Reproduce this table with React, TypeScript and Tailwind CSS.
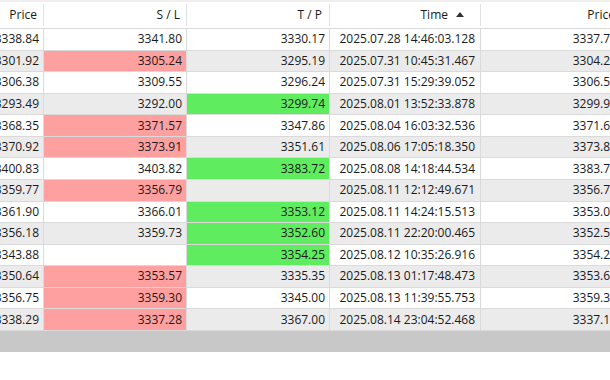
import React, { FC } from "react";

type Row = {
	price: string;
	sl: string;
	tp: string;
	time: string;
	price2: string;
	slHit?: boolean;
	tpHit?: boolean;
};

const rows: Row[] = [
	{ price: "3338.84", sl: "3341.80", tp: "3330.17", time: "2025.07.28 14:46:03.128", price2: "3337.77" },
	{ price: "3301.92", sl: "3305.24", tp: "3295.19", time: "2025.07.31 10:45:31.467", price2: "3304.29", slHit: true },
	{ price: "3306.38", sl: "3309.55", tp: "3296.24", time: "2025.07.31 15:29:39.052", price2: "3306.59" },
	{ price: "3293.49", sl: "3292.00", tp: "3299.74", time: "2025.08.01 13:52:33.878", price2: "3299.91", tpHit: true },
	{ price: "3368.35", sl: "3371.57", tp: "3347.86", time: "2025.08.04 16:03:32.536", price2: "3371.62", slHit: true },
	{ price: "3370.92", sl: "3373.91", tp: "3351.61", time: "2025.08.06 17:05:18.350", price2: "3373.85", slHit: true },
	{ price: "3400.83", sl: "3403.82", tp: "3383.72", time: "2025.08.08 14:18:44.534", price2: "3383.71", tpHit: true },
	{ price: "3359.77", sl: "3356.79", tp: "", time: "2025.08.11 12:12:49.671", price2: "3356.74", slHit: true },
	{ price: "3361.90", sl: "3366.01", tp: "3353.12", time: "2025.08.11 14:24:15.513", price2: "3353.02", tpHit: true },
	{ price: "3356.18", sl: "3359.73", tp: "3352.60", time: "2025.08.11 22:20:00.465", price2: "3352.54", tpHit: true },
	{ price: "3343.88", sl: "", tp: "3354.25", time: "2025.08.12 10:35:26.916", price2: "3354.26", tpHit: true },
	{ price: "3350.64", sl: "3353.57", tp: "3335.35", time: "2025.08.13 01:17:48.473", price2: "3353.64", slHit: true },
	{ price: "3356.75", sl: "3359.30", tp: "3345.00", time: "2025.08.13 11:39:55.753", price2: "3359.32", slHit: true },
	{ price: "3338.29", sl: "3337.28", tp: "3367.00", time: "2025.08.14 23:04:52.468", price2: "3337.15", slHit: true },
];

const cols = "grid grid-cols-[143px_143px_143px_151px_140px]";

const App: FC = () => {
	return (
		<div
			className="w-[610px] h-[380px] overflow-hidden bg-white text-[12px] text-[#1a1a1a]"
			style={{ fontFamily: '"Open Sans", "Noto Sans", sans-serif' }}
		>
			<div className="ml-[-99px] w-[720px]">
				{/* header */}
				<div className="h-[2px] bg-[#f0f0f0]" />
				<div className={`${cols} h-[26px] bg-white`}>
					<div className="flex items-center justify-end pr-[6px] border-r border-[#e3e3e3] my-[2px]">Price</div>
					<div className="flex items-center justify-end pr-[6px] border-r border-[#e3e3e3] my-[2px]">S / L</div>
					<div className="flex items-center justify-end pr-[7px] border-r border-[#e3e3e3] my-[2px]">T / P</div>
					<div className="flex items-center justify-end pr-[16px] border-r border-[#e3e3e3] my-[2px]">
						<span>Time</span>
						<svg width="8" height="5" viewBox="0 0 8 5" className="ml-[8px] mb-[2px]">
							<polygon points="4,0 8,5 0,5" fill="#333" />
						</svg>
					</div>
					<div className="flex items-center justify-end pr-[6px] my-[2px]">Price</div>
				</div>

				{/* rows */}
				{rows.map((r, i) => {
					const base = i % 2 === 0 ? "bg-white" : "bg-[#ebebeb]";
					return (
						<div key={i} className={`${cols} h-[21.57px] border-t border-[#dadada]`}>
							<div className={`${base} flex items-center justify-end pr-[4px] border-r border-[#dadada]`}>{r.price}</div>
							<div className={`${r.slHit ? "bg-[#ffa0a0]" : base} flex items-center justify-end pr-[4px] border-r border-[#dadada]`}>{r.sl}</div>
							<div className={`${r.tpHit ? "bg-[#5fed5f]" : base} flex items-center justify-end pr-[4px] border-r border-[#dadada]`}>{r.tp}</div>
							<div className={`${base} flex items-center justify-end pr-[5px] border-r border-[#dadada]`}>{r.time}</div>
							<div className={`${base} flex items-center justify-end pr-[4px]`}>{r.price2}</div>
						</div>
					);
				})}

				{/* horizontal scrollbar */}
				<div className="h-[22px] bg-[#c8c8c8] border-t border-[#dadada]" />
			</div>
		</div>
	);
};

export default App;
